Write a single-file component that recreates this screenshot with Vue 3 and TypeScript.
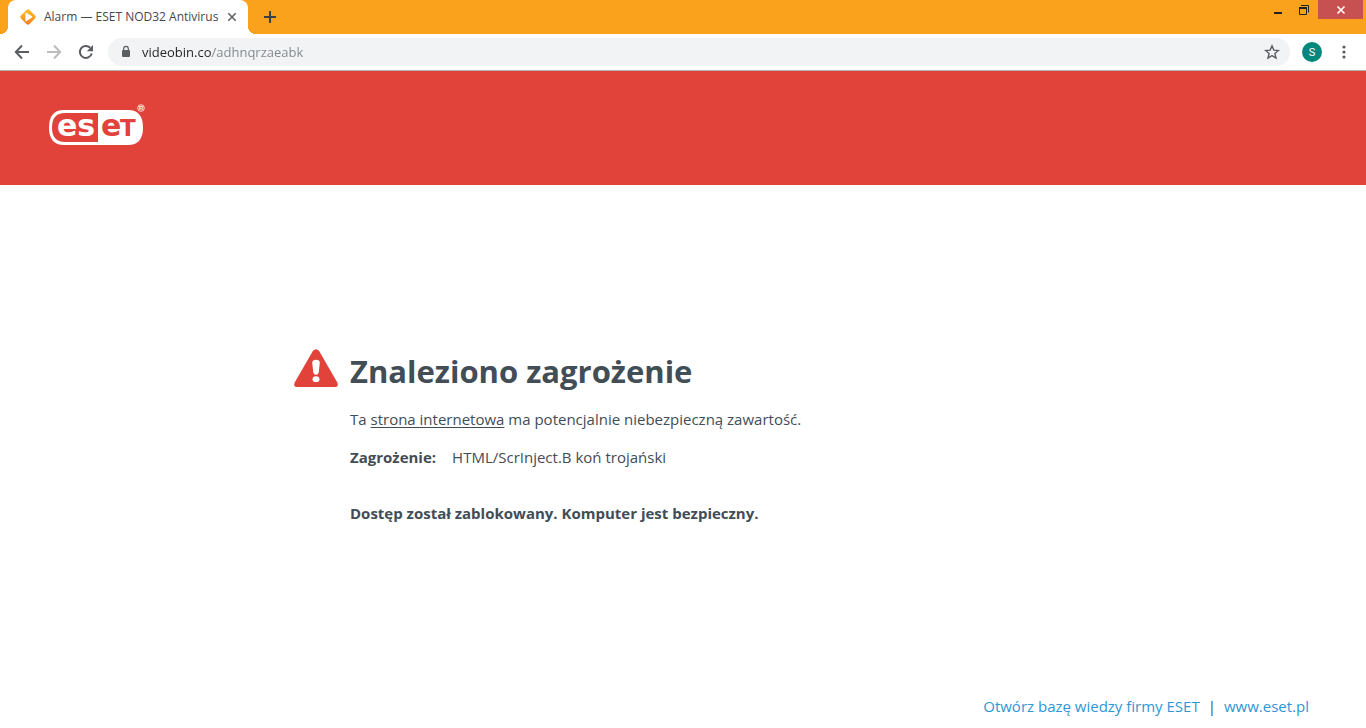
<script setup lang="ts">
import { ref } from 'vue'

const tabTitle = 'Alarm — ESET NOD32 Antivirus'
const address = ref<string>('videobin.co/adhnqrzaeabk')
const threat = 'HTML/ScrInject.B koń trojański'
</script>

<template>
  <div class="window">
    <header class="titlebar">
      <div class="tab">
        <svg class="favicon" width="16" height="16" viewBox="0 0 16 16" aria-hidden="true">
          <defs>
            <linearGradient id="fav" x1="0" y1="0" x2="1" y2="1">
              <stop offset="0" stop-color="#fbc02d" />
              <stop offset="0.5" stop-color="#fba31d" />
              <stop offset="1" stop-color="#f4722b" />
            </linearGradient>
          </defs>
          <rect x="2" y="2" width="12" height="12" rx="2.200" transform="rotate(45 8 8)" fill="url(#fav)" />
          <path d="M5.4 4.2Q5.4 3.4 6.2 3.8L12 7.3Q12.8 7.9 12 8.5L6.2 12.2Q5.4 12.6 5.4 11.8Z" fill="#fff" />
        </svg>
        <span class="tab-title">{{ tabTitle }}</span>
        <button class="tab-close" type="button" aria-label="Zamknij kartę">
          <svg width="16" height="16" viewBox="0 0 16 16"><path d="M4.300 4.300l7.400 7.400M11.700 4.300l-7.400 7.400" stroke="#5f6368" stroke-width="1.600" fill="none" /></svg>
        </button>
      </div>
      <button class="new-tab" type="button" aria-label="Nowa karta">
        <svg width="14" height="14" viewBox="0 0 14 14"><path d="M7 1v12M1 7h12" stroke="#3c4043" stroke-width="2" /></svg>
      </button>
      <div class="window-controls">
        <button class="win" type="button" aria-label="Minimalizuj">
          <svg width="12" height="12" viewBox="0 0 12 12"><rect x="2" y="8" width="8" height="2" fill="#222" /></svg>
        </button>
        <button class="win" type="button" aria-label="Przywróć">
          <svg width="12" height="12" viewBox="0 0 12 12">
            <path d="M3 1.500h7.500v7M1.500 4h7v6.500h-7z" fill="none" stroke="#222" />
            <path d="M1 4h8" stroke="#222" stroke-width="2" />
          </svg>
        </button>
        <button class="win close" type="button" aria-label="Zamknij">
          <svg width="12" height="12" viewBox="0 0 12 12"><path d="M2.500 2.500l7 7M9.500 2.500l-7 7" stroke="#fff" stroke-width="1.600" /></svg>
        </button>
      </div>
    </header>

    <nav class="toolbar" aria-label="Nawigacja">
      <button class="tool" type="button" aria-label="Wstecz">
        <svg width="20" height="20" viewBox="0 0 20 20"><path d="M17 10H4M10 3.500L3.800 10l6.200 6.500" fill="none" stroke="#5a5e63" stroke-width="2" /></svg>
      </button>
      <button class="tool" type="button" aria-label="Dalej" disabled>
        <svg width="20" height="20" viewBox="0 0 20 20"><path d="M3 10h13M10 3.500l6.200 6.500-6.200 6.500" fill="none" stroke="#babcbe" stroke-width="2" /></svg>
      </button>
      <button class="tool" type="button" aria-label="Odśwież">
        <svg width="20" height="20" viewBox="0 0 20 20">
          <path d="M15.700 11.500A6 6 0 1 1 14.200 5.700" fill="none" stroke="#5a5e63" stroke-width="2" />
          <path d="M17 3v6.200h-6.200z" fill="#5a5e63" />
        </svg>
      </button>
      <div class="omnibox">
        <svg width="16" height="16" viewBox="0 0 16 16" aria-hidden="true">
          <rect x="4" y="6" width="8" height="7" rx="1" fill="#5a5e63" />
          <path d="M5.700 6.500V4.600a2.300 2.300 0 0 1 4.600 0v1.900" fill="none" stroke="#5a5e63" stroke-width="1.200" />
        </svg>
        <input v-model="address" class="address" type="text" aria-label="Adres strony" spellcheck="false" />
        <button class="star" type="button" aria-label="Dodaj zakładkę">
          <svg width="16" height="16" viewBox="0 0 16 16"><path d="M8 1.900l1.800 4.200 4.600.4-3.500 3 1.100 4.500L8 11.600 4 14l1.100-4.500-3.500-3 4.600-.4z" fill="none" stroke="#5a5e63" stroke-width="1.400" /></svg>
        </button>
      </div>
      <button class="avatar" type="button" aria-label="Profil">S</button>
      <button class="menu" type="button" aria-label="Menu">
        <svg width="16" height="16" viewBox="0 0 16 16" fill="#5a5e63"><circle cx="8" cy="3" r="1.600" /><circle cx="8" cy="8" r="1.600" /><circle cx="8" cy="13" r="1.600" /></svg>
      </button>
    </nav>

    <div class="banner">
      <svg class="logo" width="97" height="44" viewBox="0 0 97 44" role="img" aria-label="ESET">
        <path d="M15 7H79Q94 7 94 24.500T79 42H15Q0 42 0 24.500T15 7Z" fill="#fff" />
        <path d="M49 10H16Q3 10 3 24.500T16 39H49Z" fill="#e1423a" />
        <text class="wordmark" x="8" y="33" fill="#fff">es</text>
        <text class="wordmark" x="52" y="33" fill="#e1423a">e</text>
        <text class="wordmark cap" x="71" y="33" fill="#e1423a">T</text>
        <circle cx="92" cy="5" r="3.300" fill="none" stroke="#fff" stroke-width="0.800" />
        <text class="reg" x="90" y="7">R</text>
      </svg>
    </div>

    <main class="page">
      <section class="alert">
        <svg class="warning" width="44" height="38" viewBox="0 0 44 38" aria-hidden="true">
          <path d="M19 1.800Q22-1.500 25 1.800L43.300 33.500Q45 38 41 38H3Q-1 38 .7 33.500Z" fill="#e1423a" />
          <path d="M18.200 14Q18.200 10.800 22 10.800T25.800 14L24.700 23.500Q24.300 25.700 22 25.700T19.300 23.500Z" fill="#fff" />
          <ellipse cx="22" cy="30.200" rx="3.500" ry="2.900" fill="#fff" />
        </svg>
        <div class="message">
          <h1>Znaleziono zagrożenie</h1>
          <p>Ta <a class="site" href="#">strona internetowa</a> ma potencjalnie niebezpieczną zawartość.</p>
          <dl>
            <dt>Zagrożenie:</dt>
            <dd>{{ threat }}</dd>
          </dl>
          <p class="status">Dostęp został zablokowany. Komputer jest bezpieczny.</p>
        </div>
      </section>
    </main>

    <footer class="footer">
      <a href="#">Otwórz bazę wiedzy firmy ESET</a>
      <span class="bar">|</span>
      <a href="#">www.eset.pl</a>
    </footer>
  </div>
</template>

<style>
body {
  margin: 0;
  background: #fff;
}
</style>

<style scoped>
.window {
  display: flex;
  flex-direction: column;
  min-height: 100vh;
  font-family: "Open Sans", "Noto Sans", sans-serif;
  color: #424d56;
}
button {
  display: flex;
  align-items: center;
  justify-content: center;
  padding: 0;
  border: 0;
  background: none;
  flex: none;
}
.titlebar {
  display: flex;
  height: 34px;
  padding-left: 8px;
  background: #faa21b;
}
.tab {
  position: relative;
  display: flex;
  align-items: center;
  box-sizing: border-box;
  width: 240px;
  padding: 0 8px 0 12px;
  border-radius: 8px 8px 0 0;
  background: #fff;
}
.tab::before,
.tab::after {
  content: "";
  position: absolute;
  bottom: 0;
  width: 8px;
  height: 8px;
}
.tab::before {
  left: -8px;
  background: radial-gradient(circle at 0 0, transparent 8px, #fff 8px);
}
.tab::after {
  right: -8px;
  background: radial-gradient(circle at 100% 0, transparent 8px, #fff 8px);
}
.tab-title {
  flex: 1;
  margin-left: 8px;
  font-size: 12px;
  line-height: 16px;
  white-space: nowrap;
  color: #45494d;
}
.new-tab {
  width: 28px;
  margin-left: 8px;
}
.window-controls {
  display: flex;
  align-items: flex-start;
  margin-left: auto;
  padding-right: 3px;
}
.win {
  width: 26px;
  height: 19px;
}
.win.close {
  width: 45px;
  margin-left: 1px;
  background: #c75050;
}
.toolbar {
  display: flex;
  align-items: center;
  height: 36px;
  padding: 0 14px 0 12px;
  border-bottom: 1px solid #b0b2b5;
  background: #fff;
}
.tool {
  width: 20px;
  height: 28px;
  margin-right: 12px;
}
.omnibox {
  display: flex;
  flex: 1;
  align-items: center;
  height: 28px;
  padding: 0 10px;
  border-radius: 14px;
  background: #f1f3f4;
}
.address {
  flex: 1;
  min-width: 0;
  height: 24px;
  margin-left: 8px;
  padding: 0;
  border: 0;
  outline: 0;
  background: linear-gradient(90deg, #202124 70px, #80868b 70px);
  background-clip: text;
  color: transparent;
  caret-color: #202124;
  font: 13px "Open Sans", "Noto Sans", sans-serif;
}
.avatar {
  width: 20px;
  height: 20px;
  margin: 0 14px 0 12px;
  border-radius: 50%;
  background: #00897b;
  color: #fff;
  font: 11px Roboto, sans-serif;
}
.banner {
  padding: 32px 49px 38px;
  background: #e1423a;
}
.logo {
  display: block;
}
.wordmark {
  font: bold 30px "DejaVu Sans", sans-serif;
}
.wordmark.cap {
  font-size: 23px;
}
.reg {
  font: bold 6px "Liberation Sans", Arial, sans-serif;
  fill: #fff;
}
.page {
  display: flex;
  flex: 1;
  flex-direction: column;
  justify-content: center;
  align-items: center;
}
.alert {
  display: flex;
  gap: 12px;
  width: 778px;
  max-width: 90%;
  padding-bottom: 6px;
}
.warning {
  flex: none;
}
h1 {
  margin: 0 0 14px;
  font-size: 31px;
  line-height: 44px;
}
p,
dl {
  margin: 0 0 14px;
  font-size: 15px;
  line-height: 24px;
}
dl {
  display: flex;
  gap: 16px;
}
dt {
  font-weight: 700;
}
dd {
  margin: 0;
}
.site {
  color: inherit;
  text-underline-offset: 2px;
}
.status {
  margin: 32px 0 0;
  font-weight: 700;
}
.footer {
  display: flex;
  justify-content: flex-end;
  gap: 8px;
  padding: 0 57px 10px;
  font-size: 15px;
  line-height: 24px;
}
.footer a {
  color: #2e97d3;
  text-decoration: none;
}
.bar {
  color: #424d56;
}
</style>
